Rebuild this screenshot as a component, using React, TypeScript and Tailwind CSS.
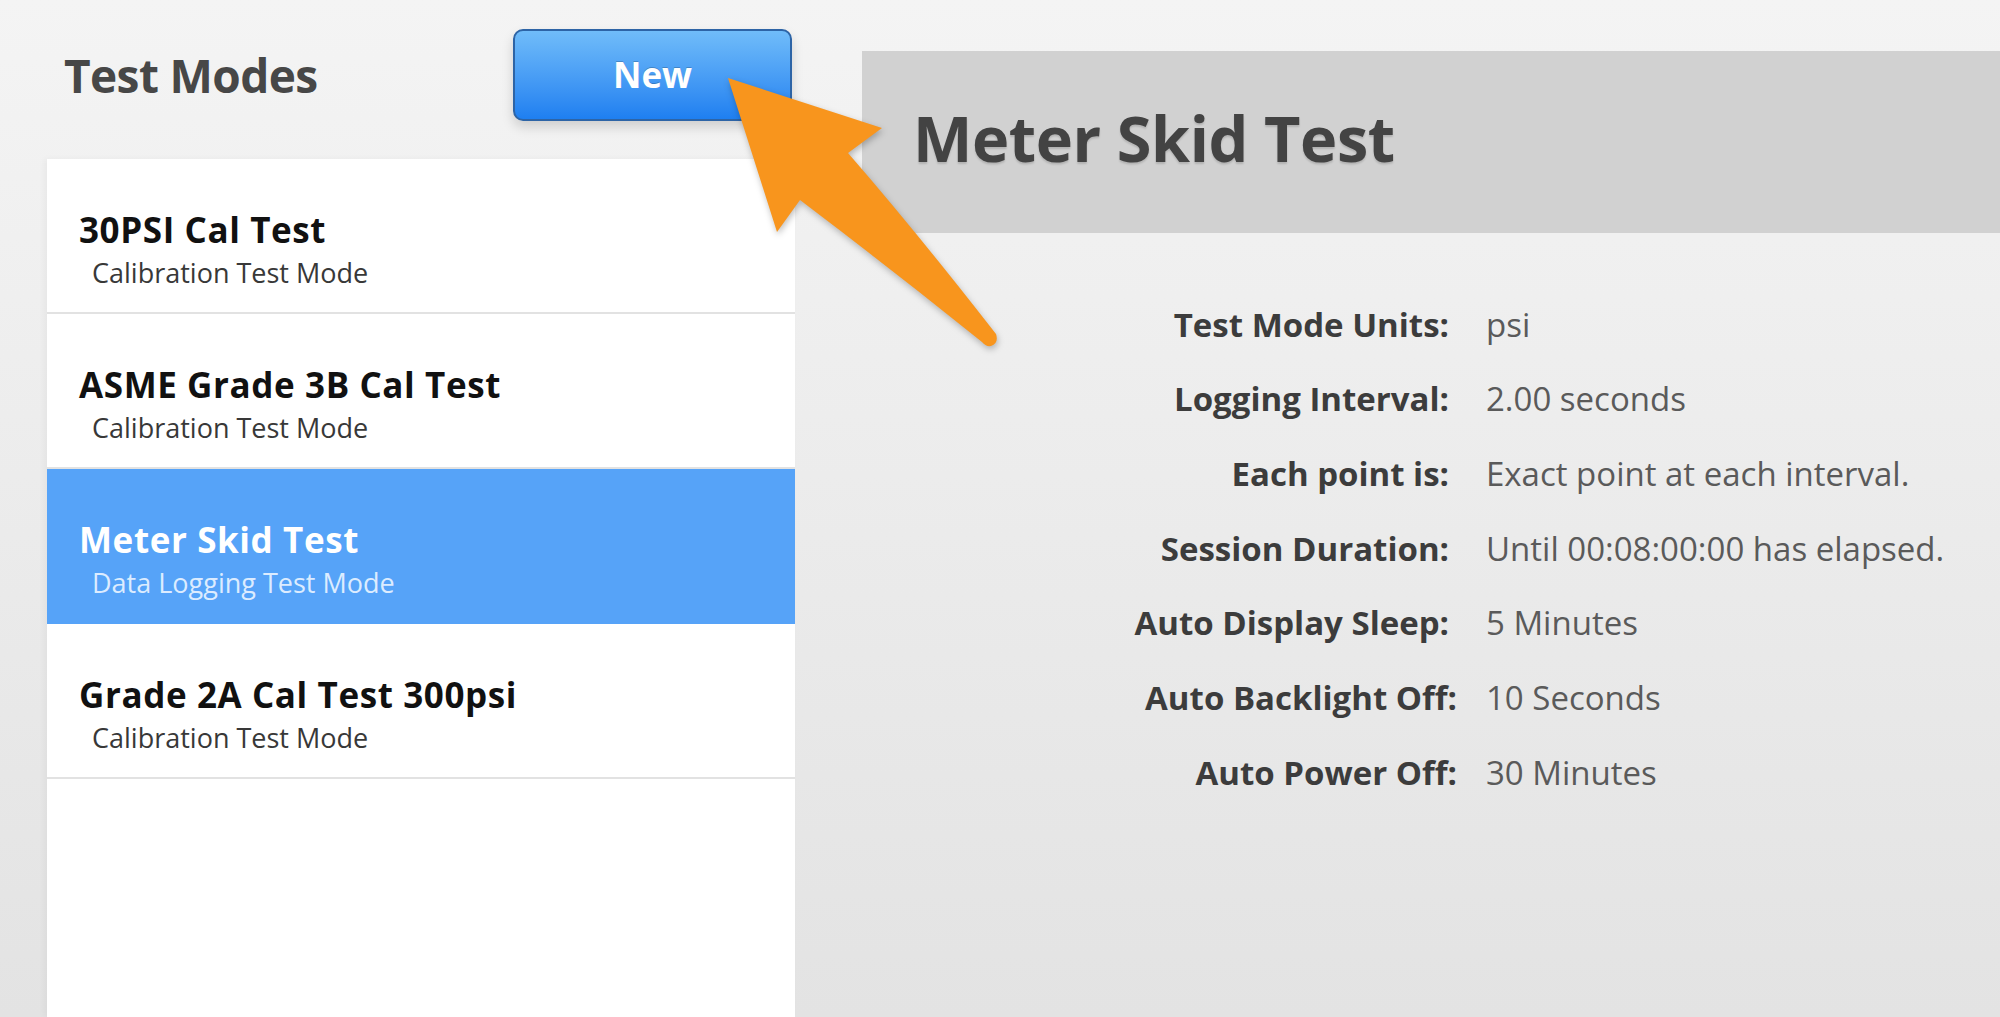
import React from 'react';

const modes = [
  { title: '30PSI Cal Test', sub: 'Calibration Test Mode' },
  { title: 'ASME Grade 3B Cal Test', sub: 'Calibration Test Mode' },
  { title: 'Meter Skid Test', sub: 'Data Logging Test Mode', selected: true },
  { title: 'Grade 2A Cal Test 300psi', sub: 'Calibration Test Mode' },
];

const details = [
  { label: 'Test Mode Units:', value: 'psi' },
  { label: 'Logging Interval:', value: '2.00 seconds' },
  { label: 'Each point is:', value: 'Exact point at each interval.' },
  { label: 'Session Duration:', value: 'Until 00:08:00:00 has elapsed.' },
  { label: 'Auto Display Sleep:', value: '5 Minutes' },
  { label: 'Auto Backlight Off:', value: '10 Seconds', shift: true },
  { label: 'Auto Power Off:', value: '30 Minutes', shift: true },
];

const Arrow = () => (
  <svg
    className="absolute left-0 top-0 pointer-events-none drop-shadow-[1px_3px_3px_rgba(0,0,0,0.25)]"
    width="1100"
    height="400"
    viewBox="0 0 1100 400"
  >
    <path
      d="M728 78 L882 128 L848 153 Q915 230 996 334 Q999 343 991 346 Q986 347 982 342 Q890 268 800 200 L777 232 Z"
      fill="#f8951d"
    />
  </svg>
);

export default function App() {
  return (
    <div className="relative flex h-[1017px] w-full overflow-hidden bg-linear-to-b from-[#f4f4f4] to-[#e3e3e3] font-['Open_Sans',sans-serif]">
      {/* Left column: list of modes */}
      <div className="flex w-[795px] shrink-0 flex-col pl-[47px]">
        <div className="mt-[29px] mb-[38px] flex h-[92px] items-center justify-between pl-[17px] pr-[3px]">
          <h1 className="text-[46px] font-bold leading-[60px] tracking-[-0.6px] text-[#474747]">Test Modes</h1>
          <button className="h-[92px] w-[279px] rounded-[10px] border-2 border-[#2d64a6] bg-linear-to-b from-[#70bcf9] to-[#1e7ff0] text-[35px] font-bold text-white shadow-[0_6px_12px_rgba(0,0,0,0.15)] [text-shadow:0_-1px_0_rgba(0,0,0,0.2)]">
            New
          </button>
        </div>
        <div className="flex-1 bg-white shadow-[-3px_0_6px_rgba(0,0,0,0.04)]">
          {modes.map((m) => (
            <div
              key={m.title}
              className={`h-[155px] border-b-2 pl-[32px] pt-[51px] ${
                m.selected ? 'border-[#56a3f8] bg-[#56a3f8]' : 'border-[#e2e2e2]'
              }`}
            >
              <div
                className={`text-[35px] font-bold leading-[40px] tracking-[0.6px] ${
                  m.selected ? 'text-white' : 'text-[#111]'
                }`}
              >
                {m.title}
              </div>
              <div
                className={`mt-[7px] pl-[13px] text-[27px] leading-[32px] ${
                  m.selected ? 'text-[#dcecff]' : 'text-[#383838]'
                }`}
              >
                {m.sub}
              </div>
            </div>
          ))}
        </div>
      </div>

      {/* Right column: selected mode details */}
      <div className="flex flex-1 flex-col pt-[51px] pl-[67px]">
        <div className="flex h-[182px] items-center bg-[#d1d1d1] pb-2 pl-[51px]">
          <h2 className="text-[63px] font-bold leading-[80px] tracking-[-0.4px] text-[#434343] [text-shadow:0_2px_2px_rgba(0,0,0,0.15)]">
            Meter Skid Test
          </h2>
        </div>
        <div className="mt-[54px] grid grid-cols-[587px_auto] gap-x-[37px]">
          {details.map((d) => (
            <React.Fragment key={d.label}>
              <div
                className={`flex h-[74.7px] items-center justify-end text-[33px] font-bold text-[#3c3c3c] ${
                  d.shift ? 'mr-[-8px]' : ''
                }`}
              >
                {d.label}
              </div>
              <div className="flex h-[74.7px] items-center text-[33px] text-[#5a5a5a]">{d.value}</div>
            </React.Fragment>
          ))}
        </div>
      </div>

      <Arrow />
    </div>
  );
}
